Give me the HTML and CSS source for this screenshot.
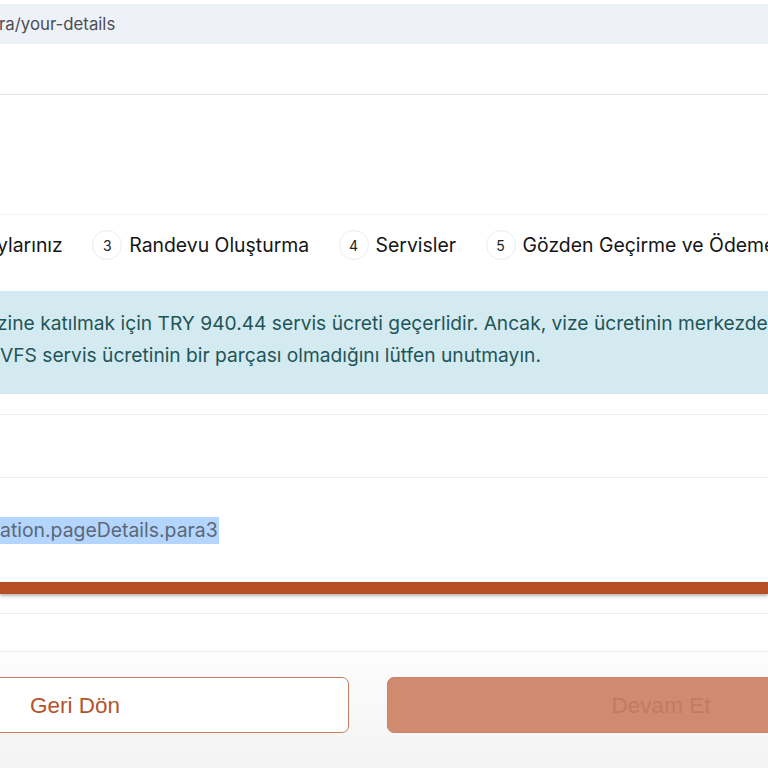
FILE: index.html
```html
<!DOCTYPE html>
<html lang="tr">
<head>
<meta charset="utf-8">
<title>Your details</title>
<link rel="stylesheet" href="styles.css">
</head>
<body>
<div class="page">
  <div class="urlbar"><span class="url">ra/your-details</span></div>
  <div class="header-row"></div>
  <div class="blank-area"></div>
  <div class="steps">
    <div class="step"><span class="step-label">ylarınız</span></div>
    <div class="step"><span class="step-num">3</span><span class="step-label">Randevu Oluşturma</span></div>
    <div class="step"><span class="step-num">4</span><span class="step-label">Servisler</span></div>
    <div class="step"><span class="step-num">5</span><span class="step-label">Gözden Geçirme ve Ödeme</span></div>
  </div>
  <div class="info">
    <span class="info-line">zine katılmak için TRY 940.44 servis ücreti geçerlidir. Ancak, vize ücretinin merkezde</span>
    <span class="info-line second">VFS servis ücretinin bir parçası olmadığını lütfen unutmayın.</span>
  </div>
  <div class="row-a"></div>
  <div class="row-b"><span class="selected">ation.pageDetails.para3</span></div>
  <div class="orange-bar"></div>
  <div class="row-c"></div>
  <div class="row-d"></div>
  <div class="footer">
    <button class="btn btn-back">Geri Dön</button>
    <button class="btn btn-next">Devam Et</button>
  </div>
</div>
</body>
</html>
```
FILE: styles.css
```css
html, body {
  margin: 0;
  padding: 0;
  background: #ffffff;
}
body {
  width: 768px;
  height: 768px;
  overflow: hidden;
  font-family: "Inter", "Noto Sans", sans-serif;
}
.page {
  display: flex;
  flex-direction: column;
  width: 768px;
  height: 768px;
  overflow: hidden;
}
.urlbar {
  margin-top: 4px;
  height: 40px;
  background: #eef1f8;
  display: flex;
  align-items: center;
}
.url {
  font-size: 16.8px;
  color: #4a4d55;
  margin-left: -1px;
}
.header-row {
  height: 50px;
  border-bottom: 1px solid #e4e4e4;
}
.blank-area {
  height: 119px;
  border-bottom: 1px solid #f2f2f2;
}
.steps {
  height: 60px;
  display: flex;
  align-items: center;
  gap: 29.5px;
  white-space: nowrap;
}
.step {
  display: flex;
  align-items: center;
  gap: 7px;
}
.step:first-child {
  margin-left: -3px;
}
.step-num {
  width: 28px;
  height: 28px;
  border-radius: 50%;
  border: 1px solid #ececec;
  display: flex;
  align-items: center;
  justify-content: center;
  font-size: 14px;
  color: #222;
}
.step-label {
  font-size: 19.4px;
  color: #151515;
}
.info {
  margin-top: 16px;
  height: 103px;
  background: #d3eaf0;
  box-sizing: border-box;
  padding-top: 16px;
  display: flex;
  flex-direction: column;
  white-space: nowrap;
  overflow: hidden;
}
.info-line {
  font-size: 19.2px;
  line-height: 32px;
  color: #1f5558;
  margin-left: -3px;
}
.info-line.second {
  margin-left: 0;
}
.row-a {
  margin-top: 20px;
  height: 62px;
  border-top: 1px solid #ececec;
  border-bottom: 1px solid #ececec;
}
.row-b {
  height: 104px;
  display: flex;
  align-items: center;
}
.selected {
  font-size: 19.4px;
  line-height: 27px;
  background: #b4d5fd;
  color: #5a6878;
  padding-right: 1px;
}
.orange-bar {
  height: 12px;
  background: #b64f23;
  box-shadow: 0 2px 3px rgba(60, 40, 40, 0.35);
}
.row-c {
  height: 19px;
  border-bottom: 1px solid #ececec;
}
.row-d {
  height: 37px;
  border-bottom: 1px solid #e9ebee;
}
.footer {
  flex: 1;
  background: linear-gradient(#fdfdfd, #f3f3f3);
  display: flex;
  gap: 38px;
  padding-top: 25px;
  margin-left: -199px;
  align-items: flex-start;
}
.btn {
  flex: none;
  width: 548px;
  height: 56px;
  border-radius: 7px;
  font-family: "Liberation Sans", Arial, sans-serif;
  font-size: 22.5px;
  padding-top: 3px;
}
.btn-back {
  background: #ffffff;
  border: 1.5px solid #c67c5d;
  color: #b4542c;
}
.btn-next {
  background: #d08a70;
  border: 1px solid #c8836a;
  color: #c27a62;
}
```
